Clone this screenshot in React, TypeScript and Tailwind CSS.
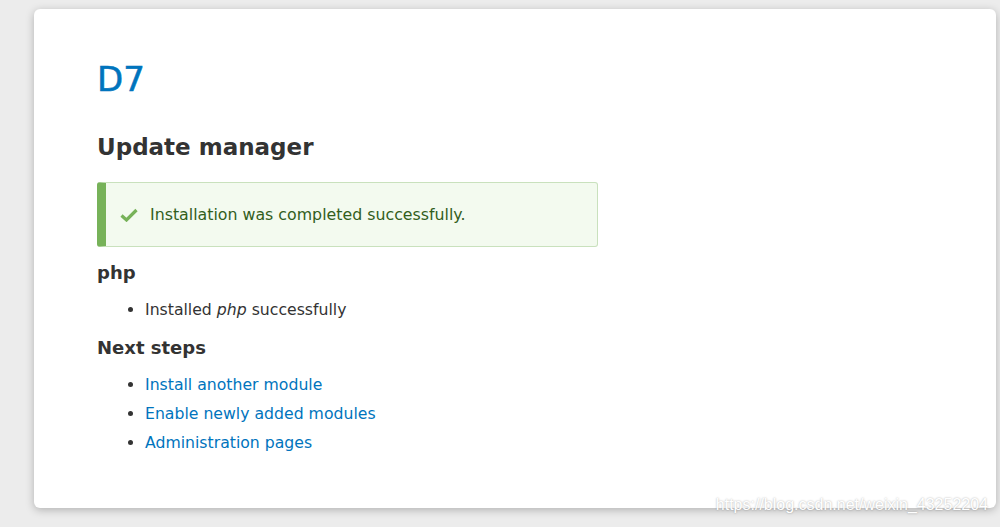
export default function App() {
  const font = { fontFamily: '"DejaVu Sans", Verdana, sans-serif' }
  return (
    <div className="relative h-[527px] w-[1000px] overflow-hidden bg-[#ececec] pt-[9px] pl-[34px]" style={font}>
      <div className="h-[499px] w-[962px] rounded-[6px] bg-white pl-[63px] pt-[48px] shadow-[0_2px_8px_rgba(0,0,0,0.25)]">
        <h1 className="text-[34px] leading-[44px] font-normal text-[#0074bd] [-webkit-text-stroke:0.6px_#0074bd]">D7</h1>

        <h2 className="mt-[30px] text-[23px] leading-[32px] font-bold text-[#333]">Update manager</h2>

        <div className="mt-[19px] flex h-[65px] w-[501px] items-center rounded-[3px] border border-l-[9px] border-[#c9e1bd] border-l-[#77b259] bg-[#f3faef] pl-[14px]">
          <svg width="18" height="14" viewBox="0 0 18 14" className="mr-[12px]">
            <path d="M1.5 7.5 L6.5 12 L16.5 2" fill="none" stroke="#77b259" strokeWidth="3.2" />
          </svg>
          <span className="text-[15.8px] text-[#325e1c]">Installation was completed successfully.</span>
        </div>

        <h3 className="mt-[14px] text-[18px] leading-[24px] font-bold text-[#333]">php</h3>
        <ul className="mt-[13px] list-disc pl-[48px] text-[15.7px] leading-[24px] text-[#333]">
          <li>
            Installed <em>php</em> successfully
          </li>
        </ul>

        <h3 className="mt-[14px] text-[18px] leading-[24px] font-bold text-[#333]">Next steps</h3>
        <ul className="mt-[13px] list-disc pl-[48px] text-[15.7px] leading-[24px] text-[#333]">
          <li className="mb-[5px]">
            <a href="#" className="text-[#0074bd]">Install another module</a>
          </li>
          <li className="mb-[5px]">
            <a href="#" className="text-[#0074bd]">Enable newly added modules</a>
          </li>
          <li>
            <a href="#" className="text-[#0074bd]">Administration pages</a>
          </li>
        </ul>
      </div>

      <div className="absolute bottom-[10px] right-[12px] text-[16px] text-white [text-shadow:0_0_2px_rgba(0,0,0,0.35)]" style={{ fontFamily: '"Liberation Sans", Arial, sans-serif' }}>
        https://blog.csdn.net/weixin_43252204
      </div>
    </div>
  )
}
